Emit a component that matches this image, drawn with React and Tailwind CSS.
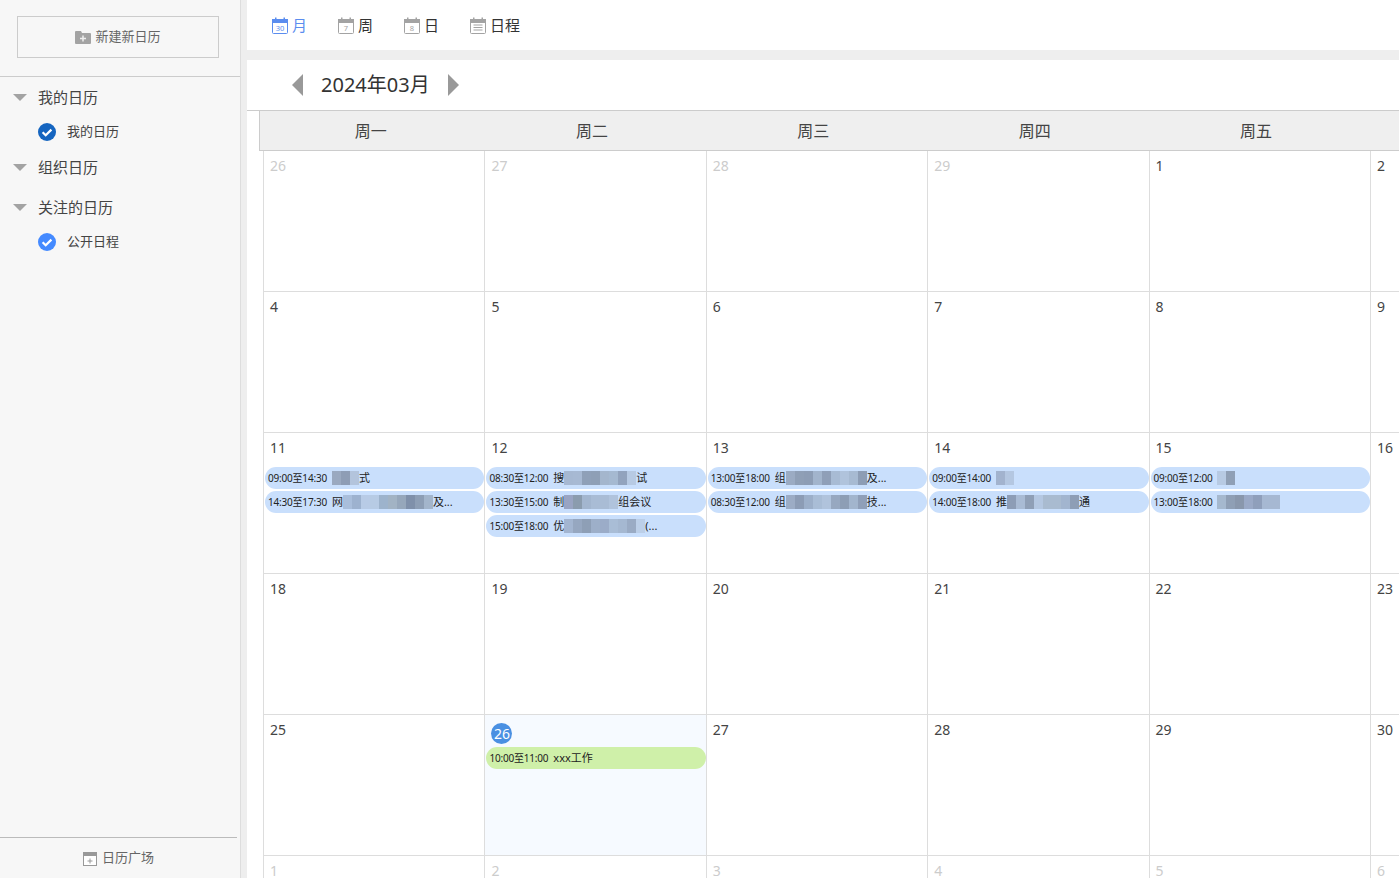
import React from "react";

const fontFamily = "font-['Noto_Sans','Noto_Sans_CJK_SC',sans-serif]";

const weekDays = ["周一", "周二", "周三", "周四", "周五"];

// mosaic strips standing in for the blurred event titles
const m1 = ["bg-[#9aa9c0]", "bg-[#8e9db5]", "bg-[#b3c4dc]"];
const m2 = ["bg-[#a9bedb]", "bg-[#9db2cf]", "bg-[#b8cbe6]", "bg-[#b7cbe4]", "bg-[#9db3cc]", "bg-[#a2b3c4]", "bg-[#96a7bb]", "bg-[#7f90aa]", "bg-[#8d9eb5]", "bg-[#a3b5cb]"];
const m3 = ["bg-[#a6b8d2]", "bg-[#a7b9d3]", "bg-[#8fa0b8]", "bg-[#8e9fb6]", "bg-[#a4b6cd]", "bg-[#a5b9d1]", "bg-[#92a3bd]", "bg-[#b7cae3]"];
const m4 = ["bg-[#99a4c2]", "bg-[#8b9cae]", "bg-[#a3b6cf]", "bg-[#a9bcd5]", "bg-[#a9bcd5]", "bg-[#b0c3dc]"];
const m5 = ["bg-[#a3b5d0]", "bg-[#96a7c0]", "bg-[#8e9fb6]", "bg-[#9dafc9]", "bg-[#9bacc8]", "bg-[#a9bdd6]", "bg-[#a5b8d1]", "bg-[#9aabc4]", "bg-[#bccfe8]"];
const m6 = ["bg-[#9babc3]", "bg-[#8f9fb6]", "bg-[#8d9db5]", "bg-[#a2b4cc]", "bg-[#8f9fb8]", "bg-[#a8bbd4]", "bg-[#b0c3dc]", "bg-[#a7bad2]", "bg-[#8d9db5]"];
const m7 = ["bg-[#9cacc5]", "bg-[#8c9cb5]", "bg-[#9cafc9]", "bg-[#a9bdd6]", "bg-[#b0c3dc]", "bg-[#97a8c0]", "bg-[#8d9eb5]", "bg-[#a2b5cd]", "bg-[#8f9fb8]"];
const m8 = ["bg-[#a2b3ce]", "bg-[#b4c7e1]"];
const m9 = ["bg-[#8d9db6]", "bg-[#a9bbd4]", "bg-[#8f9fb6]", "bg-[#b4c7e1]", "bg-[#a9bbd0]", "bg-[#a9bbd0]", "bg-[#a2b5cf]", "bg-[#8e9eb6]"];
const m10 = ["bg-[#b7cae3]", "bg-[#8f9fb5]"];
const m11 = ["bg-[#a5b8ce]", "bg-[#8f9fb5]", "bg-[#8997ac]", "bg-[#9aa9c6]", "bg-[#8f9fbb]", "bg-[#a6b8d2]", "bg-[#a6b8d2]"];

const Mosaic = ({ cells, w = "w-[9px]" }) => (
  <span className="inline-flex h-[14px] align-middle">
    {cells.map((c, i) => (
      <span key={i} className={`${w} h-full ${c}`} />
    ))}
  </span>
);

const Event = ({ time, before, cells, after, green }) => (
  <div
    className={`h-[22px] rounded-[11px] pl-[3px] pr-1 flex items-center text-[10px] text-[#222] whitespace-nowrap overflow-hidden ${
      green ? "bg-[#cff0a9]" : "bg-[#c9dffc]"
    }`}
  >
    <span className="mr-[5px] tracking-[-0.2px]">{time}</span>
    <span className="text-[11px] flex items-center">
      {before}
      {cells && <Mosaic cells={cells} />}
      {after}
    </span>
  </div>
);

const weeks = [
  [{ d: 26, dim: true }, { d: 27, dim: true }, { d: 28, dim: true }, { d: 29, dim: true }, { d: 1 }, { d: 2 }],
  [{ d: 4 }, { d: 5 }, { d: 6 }, { d: 7 }, { d: 8 }, { d: 9 }],
  [
    {
      d: 11,
      events: [
        { time: "09:00至14:30", before: "", cells: m1, after: "式" },
        { time: "14:30至17:30", before: "网", cells: m2, after: "及..." },
      ],
    },
    {
      d: 12,
      events: [
        { time: "08:30至12:00", before: "搜", cells: m3, after: "试" },
        { time: "13:30至15:00", before: "制", cells: m4, after: "组会议" },
        { time: "15:00至18:00", before: "优", cells: m5, after: " (..." },
      ],
    },
    {
      d: 13,
      events: [
        { time: "13:00至18:00", before: "组", cells: m6, after: "及..." },
        { time: "08:30至12:00", before: "组", cells: m7, after: "技..." },
      ],
    },
    {
      d: 14,
      events: [
        { time: "09:00至14:00", before: "", cells: m8, after: "" },
        { time: "14:00至18:00", before: "推", cells: m9, after: "通" },
      ],
    },
    {
      d: 15,
      events: [
        { time: "09:00至12:00", before: "", cells: m10, after: "" },
        { time: "13:00至18:00", before: "", cells: m11, after: "" },
      ],
    },
    { d: 16 },
  ],
  [{ d: 18 }, { d: 19 }, { d: 20 }, { d: 21 }, { d: 22 }, { d: 23 }],
  [
    { d: 25 },
    { d: 26, today: true, events: [{ time: "10:00至11:00", before: "xxx工作", green: true }] },
    { d: 27 },
    { d: 28 },
    { d: 29 },
    { d: 30 },
  ],
  [{ d: 1, dim: true }, { d: 2, dim: true }, { d: 3, dim: true }, { d: 4, dim: true }, { d: 5, dim: true }, { d: 6, dim: true }],
];

const CalIcon = ({ label, blue, list }) => {
  const c = blue ? "#5b8def" : "#a3a3a3";
  return (
    <svg width="16" height="17" viewBox="0 0 16 17" className="shrink-0">
      <rect x="0.5" y="2.5" width="15" height="14" rx="1" fill="#fff" stroke={c} />
      <rect x="0" y="2" width="16" height="4" fill={c} />
      <rect x="3" y="0.5" width="1.5" height="3" fill={c} />
      <rect x="11.5" y="0.5" width="1.5" height="3" fill={c} />
      {list ? (
        <path d="M3.5 8h9M3.5 10.5h9M3.5 13h9" stroke={c} strokeWidth="1" />
      ) : (
        <text x="8" y="14" textAnchor="middle" fontSize="7.5" fill={c}>
          {label}
        </text>
      )}
    </svg>
  );
};

const Check = ({ color }) => (
  <svg width="18" height="18" viewBox="0 0 18 18" className="shrink-0">
    <circle cx="9" cy="9" r="9" fill={color} />
    <path d="M4.6 9.2l3.1 3 5.7-5.6" fill="none" stroke="#fff" strokeWidth="2.2" />
  </svg>
);

const Caret = () => (
  <span className="w-0 h-0 border-x-[7px] border-x-transparent border-t-[7px] border-t-[#a3a3a3]" />
);

const Group = ({ title }) => (
  <div className="flex items-center h-5 pl-[13px] text-[15px] text-[#444]">
    <Caret />
    <span className="ml-[11px]">{title}</span>
  </div>
);

const Item = ({ title, color }) => (
  <div className="flex items-center h-5 pl-[38px] text-[13px] text-[#444]">
    <Check color={color} />
    <span className="ml-[11px]">{title}</span>
  </div>
);

const Tab = ({ title, label, blue, list, className }) => (
  <div className={`flex items-center gap-1 text-[15px] ${blue ? "text-[#5b8def]" : "text-[#333]"} ${className}`}>
    <CalIcon label={label} blue={blue} list={list} />
    <span>{title}</span>
  </div>
);

export default function App() {
  return (
    <div className={`h-[878px] w-[1399px] overflow-hidden flex bg-white ${fontFamily}`}>
      <aside className="w-[241px] shrink-0 bg-[#f7f7f7] border-r border-[#ddd] flex flex-col">
        <div className="h-[77px] shrink-0 border-b border-[#ccc] pt-4 pl-[17px]">
          <div className="w-[202px] h-[42px] border border-[#ccc] flex items-center justify-center gap-[4px] text-[13px] text-[#666]">
            <svg width="16" height="14" viewBox="0 0 16 14">
              <path d="M0 2a1 1 0 0 1 1-1h5l1 2h8a1 1 0 0 1 1 1v9a1 1 0 0 1-1 1H1a1 1 0 0 1-1-1z" fill="#a3a3a3" />
              <path d="M8 5.5v6M5 8.5h6" stroke="#eee" strokeWidth="1.5" />
            </svg>
            <span>新建新日历</span>
          </div>
        </div>
        <div className="pt-[10px]">
          <Group title="我的日历" />
          <div className="mt-[15px]">
            <Item title="我的日历" color="#1565c0" />
          </div>
          <div className="mt-[15px]">
            <Group title="组织日历" />
          </div>
          <div className="mt-5">
            <Group title="关注的日历" />
          </div>
          <div className="mt-[15px]">
            <Item title="公开日程" color="#448aff" />
          </div>
        </div>
        <div className="mt-auto w-[237px] h-[41px] border-t border-[#bbb] flex items-center justify-center gap-[5px] text-[13px] text-[#666]">
          <svg width="14" height="15" viewBox="0 0 14 15">
            <rect x="0.5" y="1.5" width="13" height="13" fill="#fff" stroke="#999" />
            <rect x="0" y="1" width="14" height="4" fill="#999" />
            <path d="M7 7.5v5M4.5 10h5" stroke="#999" />
          </svg>
          <span>日历广场</span>
        </div>
      </aside>

      <div className="w-[6px] shrink-0 bg-[#eee]" />

      <main className="flex-1 min-w-0 flex flex-col">
        <div className="h-[50px] shrink-0 flex items-center pl-[25px]">
          <Tab title="月" label="30" blue className="w-[66px]" />
          <Tab title="周" label="7" className="w-[66px]" />
          <Tab title="日" label="8" className="w-[66px]" />
          <Tab title="日程" list />
        </div>
        <div className="h-[10px] shrink-0 bg-[#eee]" />
        <div className="h-[50px] shrink-0 flex items-center pl-[45px] border-b border-[#ccc] box-content">
          <span className="w-0 h-0 border-y-[11px] border-y-transparent border-r-[11px] border-r-[#999]" />
          <span className="ml-[18px] mr-[18px] text-[20px] text-[#333]">2024年03月</span>
          <span className="w-0 h-0 border-y-[11px] border-y-transparent border-l-[11px] border-l-[#999]" />
        </div>
        <div className="ml-3 h-10 shrink-0 bg-[#efefef] border-l border-b border-[#ccc] flex text-[16px] text-[#444]">
          {weekDays.map((w) => (
            <div key={w} className="w-[221.33px] flex items-center justify-center">
              {w}
            </div>
          ))}
        </div>
        <div className="ml-4 grid grid-cols-[221.4px_221.4px_221.4px_221.4px_221.4px_1fr] auto-rows-[141px]">
          {weeks.flat().map((cell, i) => (
            <div
              key={i}
              className={`border-l border-b border-[#ddd] pl-px ${cell.today ? "bg-[#f6faff]" : ""}`}
            >
              <div className="h-[30px] pl-[5px] pt-[4px] text-[14px] leading-[22px]">
                {cell.today ? (
                  <span className="ml-[0px] mt-[4px] inline-flex items-center justify-center w-[21px] h-[21px] rounded-full bg-[#4a90e2] text-white">
                    {cell.d}
                  </span>
                ) : (
                  <span className={cell.dim ? "text-[#ccc]" : "text-[#444]"}>{cell.d}</span>
                )}
              </div>
              <div className={`flex flex-col gap-[2px] ${cell.today ? "mt-[2px]" : "mt-[4px]"}`}>
                {(cell.events || []).map((e, j) => (
                  <Event key={j} {...e} />
                ))}
              </div>
            </div>
          ))}
        </div>
      </main>
    </div>
  );
}
